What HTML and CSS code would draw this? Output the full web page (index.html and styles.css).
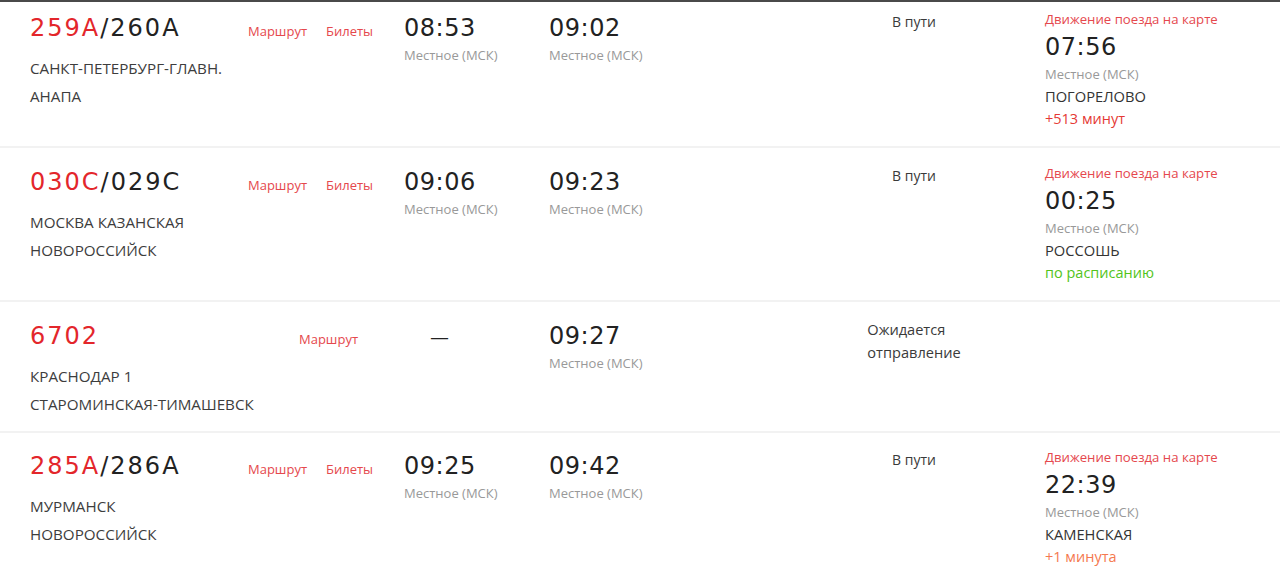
FILE: index.html
```html
<!DOCTYPE html>
<html lang="ru">
<head>
<meta charset="utf-8">
<title>Табло поездов</title>
<link rel="stylesheet" href="styles.css">
</head>
<body>
<div class="board">
  <div class="list">
    <div class="row">
      <div class="train">
        <div class="num"><span class="num-main">259А</span>/260А</div>
        <div class="stations"><div>САНКТ-ПЕТЕРБУРГ-ГЛАВН.</div><div>АНАПА</div></div>
      </div>
      <div class="links"><a class="link">Маршрут</a><a class="link">Билеты</a></div>
      <div class="time"><div class="clock">08:53</div><div class="tz">Местное (МСК)</div></div>
      <div class="time"><div class="clock">09:02</div><div class="tz">Местное (МСК)</div></div>
      <div class="status"><span class="status-text">В пути</span></div>
      <div class="map">
        <a class="map-link">Движение поезда на карте</a>
        <div class="clock">07:56</div>
        <div class="tz">Местное (МСК)</div>
        <div class="station">ПОГОРЕЛОВО</div>
        <div class="delay late">+513 минут</div>
      </div>
    </div>
    <div class="row">
      <div class="train">
        <div class="num"><span class="num-main">030С</span>/029С</div>
        <div class="stations"><div>МОСКВА КАЗАНСКАЯ</div><div>НОВОРОССИЙСК</div></div>
      </div>
      <div class="links"><a class="link">Маршрут</a><a class="link">Билеты</a></div>
      <div class="time"><div class="clock">09:06</div><div class="tz">Местное (МСК)</div></div>
      <div class="time"><div class="clock">09:23</div><div class="tz">Местное (МСК)</div></div>
      <div class="status"><span class="status-text">В пути</span></div>
      <div class="map">
        <a class="map-link">Движение поезда на карте</a>
        <div class="clock">00:25</div>
        <div class="tz">Местное (МСК)</div>
        <div class="station">РОССОШЬ</div>
        <div class="delay ontime">по расписанию</div>
      </div>
    </div>
    <div class="row row-short">
      <div class="train">
        <div class="num"><span class="num-main">6702</span></div>
        <div class="stations"><div>КРАСНОДАР 1</div><div>СТАРОМИНСКАЯ-ТИМАШЕВСК</div></div>
      </div>
      <div class="links links-single"><a class="link">Маршрут</a></div>
      <div class="time"><div class="clock dash">—</div></div>
      <div class="time"><div class="clock">09:27</div><div class="tz">Местное (МСК)</div></div>
      <div class="status"><span class="status-text status-wait">Ожидается<br>отправление</span></div>
      <div class="map"></div>
    </div>
    <div class="row row-last">
      <div class="train">
        <div class="num"><span class="num-main">285А</span>/286А</div>
        <div class="stations"><div>МУРМАНСК</div><div>НОВОРОССИЙСК</div></div>
      </div>
      <div class="links"><a class="link">Маршрут</a><a class="link">Билеты</a></div>
      <div class="time"><div class="clock">09:25</div><div class="tz">Местное (МСК)</div></div>
      <div class="time"><div class="clock">09:42</div><div class="tz">Местное (МСК)</div></div>
      <div class="status"><span class="status-text">В пути</span></div>
      <div class="map">
        <a class="map-link">Движение поезда на карте</a>
        <div class="clock">22:39</div>
        <div class="tz">Местное (МСК)</div>
        <div class="station">КАМЕНСКАЯ</div>
        <div class="delay minor">+1 минута</div>
      </div>
    </div>
  </div>
</div>
</body>
</html>
```

FILE: styles.css
```css
* { box-sizing: border-box; }
html, body { margin: 0; padding: 0; background: #fff; }
body {
  font-family: "Open Sans", "Noto Sans", sans-serif;
  font-size: 14px;
  color: #333;
  overflow: hidden;
  height: 576px;
}
.board {
  border-top: 2px solid #4a4a4a;
  overflow: hidden;
  height: 576px;
}
.list {
  margin-top: -8px;
}
.row {
  display: grid;
  grid-template-columns: 218px 156px 145px 241px 248px 1fr;
  padding: 16px 0 0 30px;
  height: 154px;
  border-bottom: 2px solid #f2f2f2;
  align-items: start;
}
.row-short { height: 131px; }
.row-last { border-bottom: none; padding-top: 15px; }

.num {
  font-family: "DejaVu Sans", sans-serif;
  font-size: 24px;
  line-height: 30px;
  letter-spacing: 2px;
  color: #222;
  margin-top: 3px;
}
.num-main { color: #e3262b; }
.stations {
  margin-top: 12px;
  line-height: 27.5px;
  font-size: 15.2px;
  color: #3d3d3d;
  white-space: nowrap;
}

.links {
  display: flex;
  gap: 19px;
  padding-top: 12px;
  font-size: 13px;
}
.links-single { padding-left: 51px; }
.link { color: #e5484d; text-decoration: none; }

.time { padding-top: 3px; }
.clock {
  font-family: "DejaVu Sans", sans-serif;
  font-size: 24px;
  line-height: 30px;
  letter-spacing: 0.5px;
  color: #222;
}
.dash {
  font-size: 19px;
  padding-left: 26px;
  padding-top: 2px;
  line-height: 28px;
}
.tz {
  font-size: 13px;
  line-height: 20px;
  color: #999;
}
.time .tz { margin-top: 2px; }

.status {
  display: flex;
  justify-content: center;
}
.status-text {
  text-align: left;
  font-size: 14px;
  line-height: 23px;
  color: #3a3a3a;
}
.status-wait { font-size: 14.6px; }

.map {
  padding-left: 7px;
  margin-top: -1px;
}
.map-link {
  display: block;
  color: #e5484d;
  font-size: 13.2px;
  line-height: 20px;
}
.map .clock { margin-top: 3px; }
.map .tz { margin-top: 2px; }
.station {
  font-size: 14.7px;
  line-height: 22px;
  margin-top: 1px;
  color: #333;
}
.delay {
  font-size: 14.5px;
  line-height: 23px;
}
.late { color: #e53935; }
.ontime { color: #52c41a; }
.minor { color: #f5794f; }
```
